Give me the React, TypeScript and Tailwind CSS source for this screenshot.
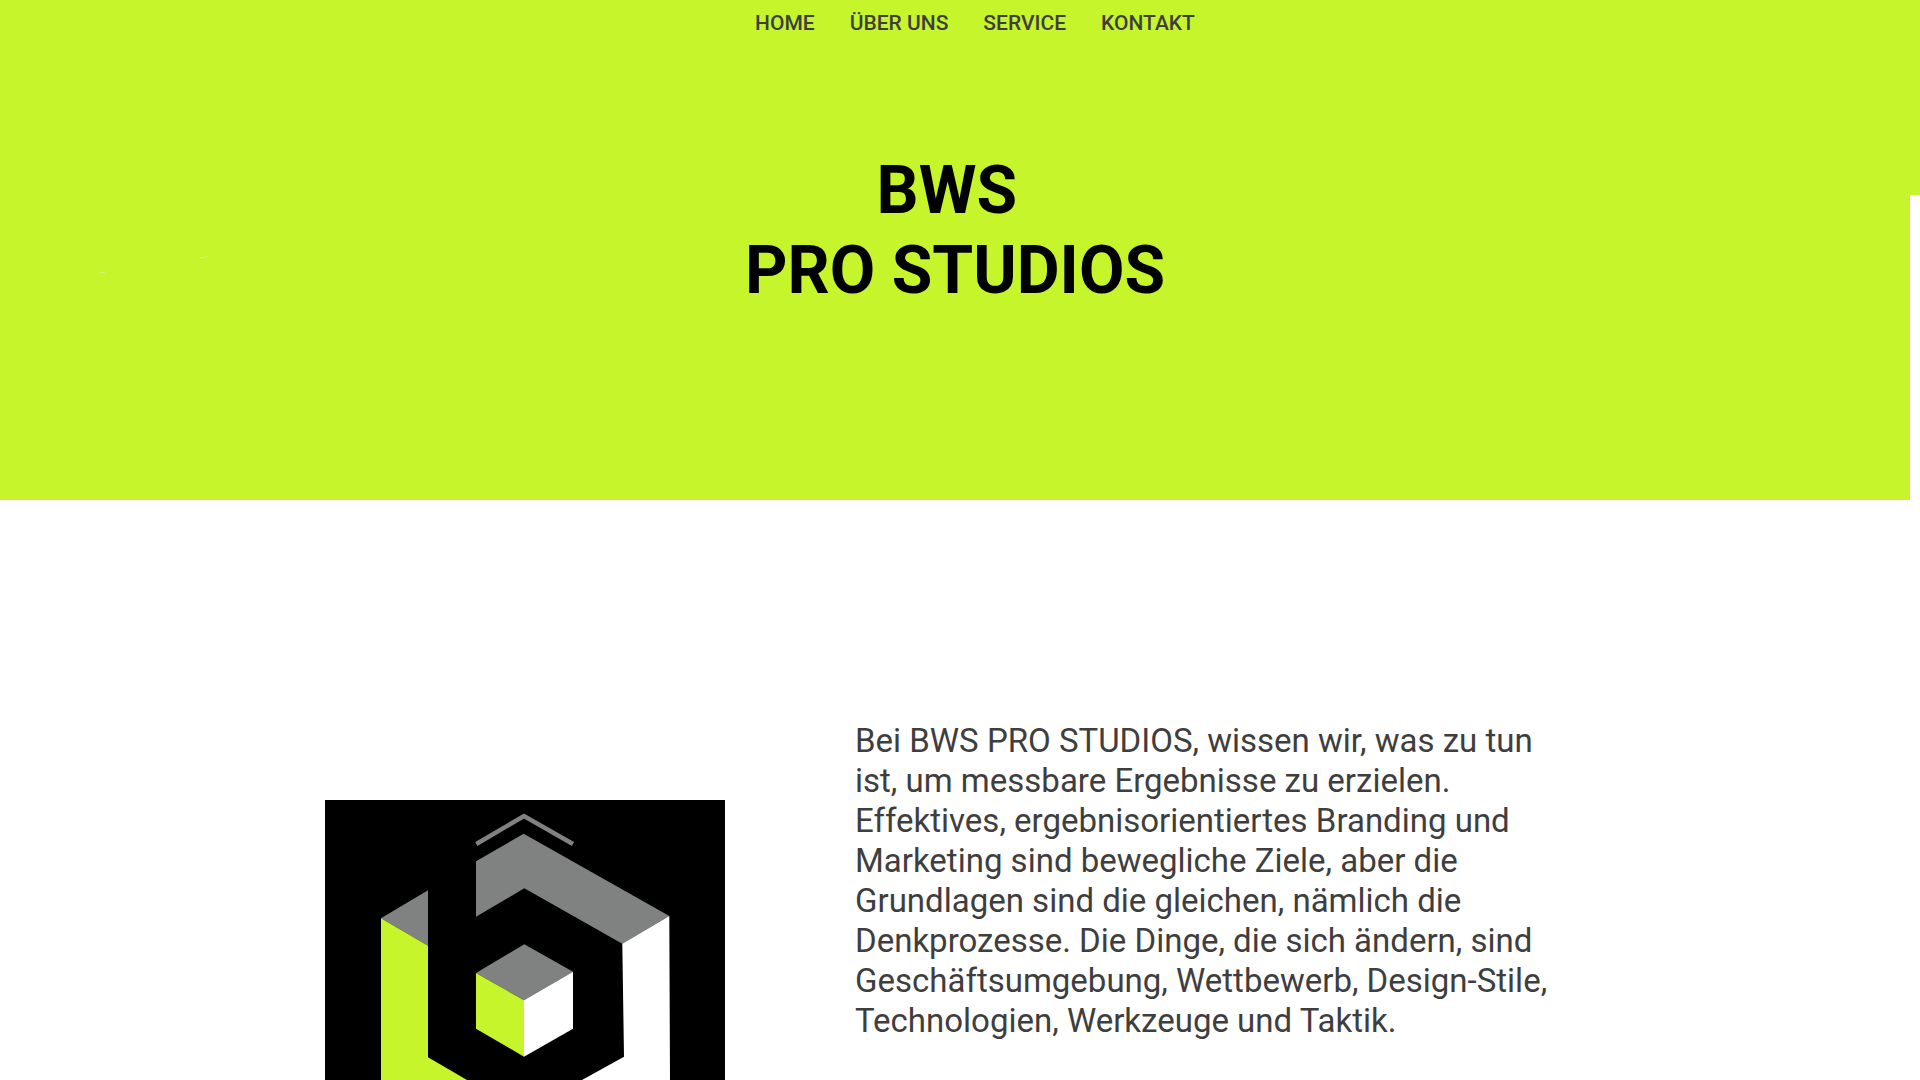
const links = [
  { label: 'HOME', href: '#home' },
  { label: 'ÜBER UNS', href: '#ueber-uns' },
  { label: 'SERVICE', href: '#service' },
  { label: 'KONTAKT', href: '#kontakt' },
];

function Logo() {
  return (
    <svg viewBox="0 0 400 280" className="block w-[400px] shrink-0" role="img" aria-label="BWS Pro Studios">
      <rect width="400" height="280" fill="#000" />
      <g fill="#808281">
        <polyline points="151.3,44 199,16 248,44" fill="none" stroke="#808281" strokeWidth="4.4" />
        <polygon points="151,61.3 198.7,33.7 344.3,116 297.3,143.7 199.3,88.3 151,116.7" />
        <polygon points="56,118.3 103,90.3 103,145.7" />
        <polygon points="199.3,144.3 248,171.7 199,200.3 151,173" />
      </g>
      <g fill="#c6f52c">
        <polygon points="56,118.3 103,145.7 103,257.3 142,280 56,280" />
        <polygon points="151,173 199,200.3 199,256.7 151,228.7" />
      </g>
      <g fill="#fff">
        <polygon points="344.3,116 345,280 257,280 299,256.7 297.3,143.7" />
        <polygon points="248,171.7 248,228.7 199,256.7 199,200.3" />
      </g>
    </svg>
  );
}

function Specks() {
  return (
    <svg viewBox="0 0 112 20" className="absolute left-[97px] top-[255px] w-[112px]" aria-hidden="true">
      <g fill="#d3f768">
        <rect x="3" y="17" width="5" height="1" />
        <rect x="1" y="18" width="1" height="1" />
        <rect x="103" y="2" width="5" height="1" />
        <rect x="109" y="1" width="2" height="1" />
      </g>
    </svg>
  );
}

export default function App() {
  return (
    <div className="bg-white font-['Roboto',sans-serif] text-[#3e3e3e]">
      <header id="home" className="relative bg-[#c6f52c] pb-[189px]">
        <nav aria-label="Hauptnavigation" className="flex justify-center pt-[9px] pl-[30px]">
          <ul className="flex gap-[35px] text-[21px] leading-7 font-medium">
            {links.map((link) => (
              <li key={link.href}>
                <a href={link.href}>{link.label}</a>
              </li>
            ))}
          </ul>
        </nav>
        <h1 className="mt-[114px] pr-[10px] text-center text-[66px] leading-[80px] font-bold text-black">
          BWS&nbsp;
          <br />
          PRO STUDIOS
        </h1>
        <Specks />
        <div className="absolute top-[195px] right-0 bottom-0 w-[10px] bg-white" />
      </header>
      <main id="ueber-uns" className="flex items-end pt-[221px] pl-[325px]">
        <Logo />
        <p className="ml-[130px] w-[720px] pb-[39px] text-[33px] leading-10">
          Bei BWS PRO STUDIOS, wissen wir, was zu tun ist, um messbare Ergebnisse zu erzielen. Effektives,
          ergebnisorientiertes Branding und Marketing sind bewegliche Ziele, aber die Grundlagen sind die gleichen,
          nämlich die Denkprozesse. Die Dinge, die sich ändern, sind Geschäftsumgebung, Wettbewerb, Design-Stile,
          Technologien, Werkzeuge und Taktik.
        </p>
      </main>
    </div>
  );
}
